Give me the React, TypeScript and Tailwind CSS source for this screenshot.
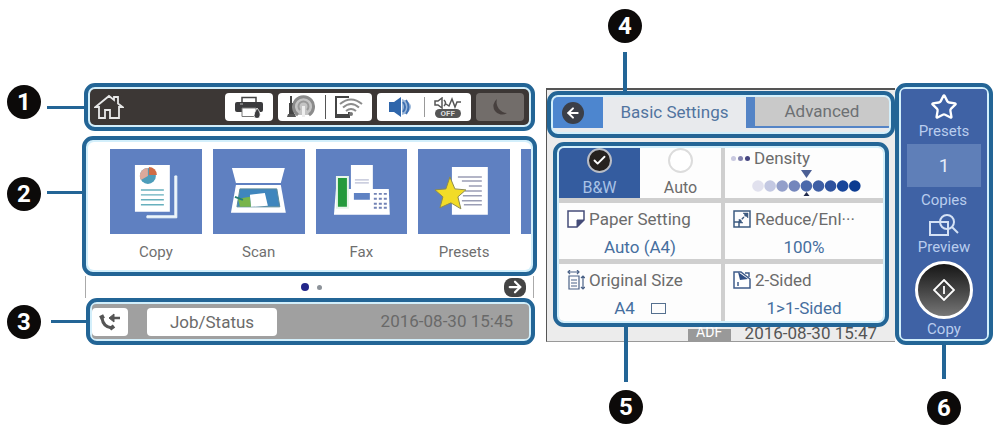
import type { ReactNode } from 'react';
import { ArrowLeft, ArrowRight, Check, Star } from 'lucide-react';
import clsx from 'clsx';

function Badge({ children }: { children: ReactNode }) {
  return (
    <span className="flex size-[34px] shrink-0 items-center justify-center rounded-full bg-[#0c0a09] text-[24px] leading-none font-bold text-white">
      {children}
    </span>
  );
}

function Frame({ className, children }: { className?: string; children: ReactNode }) {
  return (
    <div className={clsx('rounded-[11px] border-4 border-[#236596] bg-[#d3effb] p-[2px]', className)}>
      {children}
    </div>
  );
}

function PrinterIcon() {
  return (
    <svg viewBox="0 0 30 22" className="h-[22px] w-[30px]">
      <path d="M8 7V1.5h14V7" fill="#fff" stroke="#444" strokeWidth="1.5" />
      <path d="M3 6h24q2 0 2 2v6q0 2-2 2H3q-2 0-2-2V8q0-2 2-2z" fill="#3b3b3d" />
      <path d="M6 8h3" stroke="#bbb" />
      <path d="M8 12h14v8.5H8z" fill="#fff" stroke="#777" />
      <path d="M23 12q4 5 3 7.500a3 3 0 0 1-6 0q0-2.500 3-7.500z" fill="#3b3b3d" stroke="#fff" strokeWidth=".8" />
    </svg>
  );
}

function NetworkIcon() {
  return (
    <svg viewBox="0 0 28 24" className="h-6 w-7">
      <path d="M4 1v18" stroke="#444" strokeWidth="2" />
      <path d="M2 8h5v12H2z" fill="#444" />
      <path d="M0 22h9l-1-3H1z" fill="#555" />
      <path d="M11 20a10 10 0 1 1 11 0" fill="#c4c4c4" stroke="#8b8b8b" strokeWidth="3" />
      <path d="M13 15a5 5 0 1 1 7 0" fill="none" stroke="#999" strokeWidth="2" />
      <path d="M16.500 11v11" stroke="#eee" strokeWidth="3" />
    </svg>
  );
}

function TabletWifiIcon() {
  return (
    <svg viewBox="0 0 30 24" className="h-6 w-[30px]" fill="none">
      <path d="M14 3V2H2v20h13v-5" stroke="#444" strokeWidth="2" />
      <path d="M2 19h13v3H2z" fill="#444" />
      <path d="M6 9q11-9 22 0M9 12.500q8-7 16 0M12 16q5-4 10 0" stroke="#8c8c8c" strokeWidth="2" />
      <circle cx="17" cy="19" r="2" fill="#777" />
    </svg>
  );
}

function SpeakerIcon() {
  return (
    <svg viewBox="0 0 22 20" className="h-5 w-[22px]">
      <path d="M0 5h5l7-5v20l-7-5H0z" fill="#2f66ab" />
      <path d="M13 2q9 3 9 8t-9 8z" fill="#9db9da" />
      <path d="M14 5q4 5 0 10M17 3q5 7 0 14" fill="none" stroke="#3f70b1" strokeWidth="2" />
    </svg>
  );
}

function QuietOffIcon() {
  return (
    <span className="flex flex-col items-center">
      <svg viewBox="0 0 28 12" className="h-3 w-7" fill="none" stroke="#555" strokeWidth="1.5">
        <path d="M1 4h3l4-3v10L4 8H1zM10 3q3 3 0 6M12 7l3 2 3-7 3 8 2-5h4" />
      </svg>
      <span className="rounded-full bg-[#555] px-[6px] text-[8px] leading-[9px] font-bold text-[#ddd]">OFF</span>
    </span>
  );
}

function HomeIcon() {
  return (
    <svg viewBox="0 0 30 26" className="h-[26px] w-[30px]" fill="none" stroke="#e8e8e8" strokeWidth="1.8">
      <path d="M5 13H1.500L15 2l5 4V3h4v6.500l4.500 3.500H25v11h-9v-8h-5v8H5z" />
    </svg>
  );
}

function CopyArt() {
  return (
    <svg viewBox="0 0 92 85" className="w-full">
      <path d="M65 27h2v42H37v-2h28z" fill="#eef6fb" stroke="#eef6fb" />
      <path d="M25 16h35v47H25z" fill="#fff" />
      <circle cx="38" cy="27" r="8" fill="#4d9dba" />
      <path d="M38 27V19a8 8 0 0 0-7 12z" fill="#dba99b" />
      <path d="M39 26v-8a8 8 0 0 1 8 8z" fill="#cf6c45" />
      <path d="M31 41h23M31 46h23M31 51h23M31 56h23" stroke="#67b0bd" strokeWidth="1.5" />
    </svg>
  );
}

function ScanArt() {
  return (
    <svg viewBox="0 0 92 85" className="w-full">
      <path d="M19 19h53l-4 15H23z" fill="#fff" />
      <path d="M23 36h45l5 28H18z" fill="#fff" />
      <path d="M27 40h37l3 18H24z" fill="#3f86bd" stroke="#5a8a9a" />
      <path d="M37 46l15-2 3 13-17 1z" fill="#fff" />
      <path d="M25 50l12-2 1 10H27z" fill="#78b54a" />
      <path d="M22 48l8 3" stroke="#267f77" strokeWidth="2" />
    </svg>
  );
}

function FaxArt() {
  return (
    <svg viewBox="0 0 92 85" className="w-full">
      <path d="M35 16h22v25H35z" fill="#fff" />
      <path d="M39 31h14M39 34h14" stroke="#a9adc9" />
      <path d="M20 40h53l1 26H18z" fill="#fff" />
      <path d="M21 28h11v31H21z" fill="#259a3c" stroke="#e8f5ea" strokeWidth="2" />
      <path d="M38 44h16v7H38z" fill="#5f82c3" />
      <path d="M58 45h13M58 50h13M58 55h13M58 59h13" stroke="#7182b5" strokeWidth="2" strokeDasharray="3 2" />
    </svg>
  );
}

function PresetsArt() {
  return (
    <svg viewBox="0 0 92 85" className="w-full">
      <path d="M34 18h36v48H34z" fill="#fff" />
      <path d="M40 28h24M44 32h20M51 37h13M47 42h17M45 47h19M44 52h20M46 56h18" stroke="#9a9db5" strokeWidth="1.500" />
      <path d="M32 28l5 12 11 1-8 7 3 12-10-6-11 5 3-11-8-7 11-1z" fill="#f2dc28" stroke="#8d8b50" />
    </svg>
  );
}

const apps = [
  { label: 'Copy', art: <CopyArt /> },
  { label: 'Scan', art: <ScanArt /> },
  { label: 'Fax', art: <FaxArt /> },
  { label: 'Presets', art: <PresetsArt /> },
];

const densityDots = ['#e1e1ee', '#c3c8e2', '#939fca', '#7486bc', '#4b69ab', '#3f5fa5', '#2e529e', '#17459a', '#0b3b91'];

function PaperIcon() {
  return (
    <svg viewBox="0 0 18 18" className="size-[18px]">
      <path d="M1 1h16v9l-7 7H1z" fill="#fff" stroke="#454c79" strokeWidth="1.500" />
      <path d="M17 10h-7v7z" fill="#454c79" stroke="#454c79" />
    </svg>
  );
}

function ResizeIcon() {
  return (
    <svg viewBox="0 0 18 18" className="size-[18px]" fill="none" stroke="#3d5b80" strokeWidth="1.500">
      <path d="M1 1h16v16H1zM1 12h5v5" />
      <path d="M6 12l8-8" strokeDasharray="3 1" />
      <path d="M10 3h5v5zM6 9l4 4H6z" fill="#3d5b80" strokeWidth=".5" />
    </svg>
  );
}

function OriginalIcon() {
  return (
    <svg viewBox="0 0 18 20" className="h-5 w-[18px]" fill="none" stroke="#4b6287" strokeWidth="1.200">
      <path d="M1 2h11M3 0L1 2l2 2M10 0l2 2-2 2M2 6h10v13H2zM4 10h6M4 13h6M4 16h6M16 6v13M14 8l2-2 2 2M14 17l2 2 2-2" />
    </svg>
  );
}

function SidedIcon() {
  return (
    <svg viewBox="0 0 18 18" className="size-[18px]">
      <path d="M1 1h7l9 7v9H1z" fill="#fff" stroke="#3f5c8a" strokeWidth="1.500" />
      <path d="M5 1l2 8 8-1z" fill="#2f4f86" />
      <path d="M5 11v4M12 2h4v4" fill="none" stroke="#3f5c8a" strokeWidth="1.500" />
    </svg>
  );
}

function SettingCell({ icon, title, value }: { icon: ReactNode; title: string; value: ReactNode }) {
  return (
    <button className="flex h-full min-w-0 flex-col bg-[#fdfdfd] px-2 pt-1 text-[17px] leading-6">
      <span className="flex items-center gap-1 whitespace-nowrap text-[#6b6b6b]">
        {icon}
        {title}
      </span>
      <span className="flex items-center justify-center gap-4 self-stretch pt-1 text-[#466f9f]">{value}</span>
    </button>
  );
}

function HomeScreen() {
  return (
    <section className="pt-[83px] pl-[7px]">
      {/* Status icons */}
      <div className="mr-[2px] flex">
        <div className="pt-[2px]"><Badge>1</Badge></div>
        <span className="ml-[6px] h-[3px] w-[37px] shrink-0 self-center bg-[#236596]" />
        <Frame className="min-w-0 flex-1">
          <div className="flex h-9 items-center gap-[5px] rounded-[5px] bg-[#3c3735] pr-[5px] pl-1">
            <button aria-label="Home"><HomeIcon /></button>
            <button aria-label="Ink levels" className="ml-auto flex h-7 w-12 items-center justify-center rounded bg-white">
              <PrinterIcon />
            </button>
            <div className="flex h-7 w-[94px] items-center rounded bg-white">
              <button aria-label="Network" className="flex flex-1 justify-center border-r border-[#555]"><NetworkIcon /></button>
              <button aria-label="Wi-Fi device" className="flex flex-1 justify-center"><TabletWifiIcon /></button>
            </div>
            <div className="flex h-7 w-[94px] items-center rounded bg-white">
              <button aria-label="Sound" className="flex flex-1 justify-center border-r border-[#999]"><SpeakerIcon /></button>
              <button aria-label="Quiet mode" className="flex flex-1 justify-center"><QuietOffIcon /></button>
            </div>
            <button aria-label="Sleep" className="flex h-7 w-12 items-center justify-center rounded bg-[#726d6a]">
              <svg viewBox="0 0 16 18" className="h-[18px] w-4">
                <path d="M5 1a8 8 0 1 0 10 14A11 11 0 0 1 5 1z" fill="#47403e" />
              </svg>
            </button>
          </div>
        </Frame>
      </div>

      {/* App tiles */}
      <div className="mt-[5px] flex">
        <div className="pt-[41px]"><Badge>2</Badge></div>
        <span className="mt-[55px] ml-[6px] h-[3px] w-[35px] shrink-0 bg-[#236596]" />
        <Frame className="min-w-0 flex-1">
          <div className="flex h-32 gap-[11px] overflow-hidden rounded-[6px] bg-white pt-[7px] pl-[22px]">
            {apps.map((app) => (
              <button key={app.label} className="flex min-w-0 flex-[92_0_0px] flex-col items-center">
                <span className="w-full bg-[#5f80c1]">{app.art}</span>
                <span className="pt-2 text-[15px] leading-5 text-[#6f6f6f]">{app.label}</span>
              </button>
            ))}
            <span className="h-[85px] w-[10px] bg-[#5f80c1]" />
          </div>
        </Frame>
      </div>

      {/* Pager */}
      <div className="mr-[3px] ml-[78px] flex h-[22px] items-center border-x border-[#aaa]">
        <span className="flex flex-1 items-center justify-center gap-1 pl-8">
          <span className="size-2 rounded-full bg-[#23268a]" />
          <span className="ml-1 size-[5px] rounded-full bg-[#8c9299]" />
        </span>
        <button aria-label="Next page" className="mr-[7px] flex h-[19px] w-[22px] items-center justify-center rounded-[8px] bg-[#444] text-white">
          <ArrowRight size={18} strokeWidth={3} />
        </button>
      </div>

      {/* Status bar */}
      <div className="mr-[2px] flex items-center">
        <Badge>3</Badge>
        <span className="ml-[10px] h-[3px] w-[35px] shrink-0 bg-[#236596]" />
        <Frame className="min-w-0 flex-1">
          <div className="flex h-[35px] items-center rounded-[4px] bg-[#a0a0a0] pr-4">
            <button aria-label="Missed call" className="flex h-7 w-9 items-center justify-center rounded bg-white">
              <svg viewBox="0 0 22 18" className="h-[18px] w-[22px]" fill="none" stroke="#555">
                <path d="M3 5q1 9 10 10" strokeWidth="3" />
                <path d="M1 5l4-2M11 16l4-3" strokeWidth="4" />
                <path d="M21 5h-8" strokeWidth="2.500" />
                <path d="M15 1v8l-5-4z" fill="#555" strokeWidth="1" />
              </svg>
            </button>
            <button className="ml-[19px] h-7 w-[130px] rounded bg-white text-[17px] leading-7 text-[#6b6b6b]">Job/Status</button>
            <time className="ml-auto text-[17px] whitespace-nowrap text-[#696969]">2016-08-30 15:45</time>
          </div>
        </Frame>
      </div>
    </section>
  );
}

function CopyScreen() {
  return (
    <div className="min-w-0 flex-1 pt-[9px] pl-[9px]">
      <div className="ml-[62px] flex w-[34px] flex-col items-center">
        <Badge>4</Badge>
        <span className="relative z-10 mt-[9px] -mb-[3px] h-[39px] w-1 bg-[#236596]" />
      </div>

      <div className="border-t-2 border-b border-l border-[#555] border-b-[#999] bg-[#ececec] pt-[1px]">
        {/* Tabs */}
        <Frame>
          <div role="tablist" className="flex h-[35px] items-start overflow-hidden rounded-[5px] bg-[#e8eaed]">
            <button aria-label="Back" className="h-[31px] w-[50px] shrink-0 bg-[#4d86cf] pl-[9px]">
              <span className="flex size-[22px] items-center justify-center rounded-full bg-[#3b3f48] text-white">
                <ArrowLeft size={16} strokeWidth={3} />
              </span>
            </button>
            <button role="tab" aria-selected="true" className="h-[31px] min-w-0 flex-[143_0_0px] text-[17px] whitespace-nowrap text-[#51749f]">
              Basic Settings
            </button>
            <button role="tab" aria-selected="false" className="h-[31px] min-w-0 flex-[134_0_0px] border-b-2 border-l-[9px] border-[#5484c6] bg-[#c9c9c9] text-[17px] text-[#6d7073]">
              Advanced
            </button>
          </div>
        </Frame>

        {/* Settings */}
        <Frame className="mx-[6px] mt-1">
          <div className="grid grid-cols-[162fr_158fr] grid-rows-[50px_56px_57px] gap-x-1 gap-y-[5px] overflow-hidden rounded-[5px] bg-[#cfcfcf]">
            <div role="radiogroup" aria-label="Color mode" className="grid grid-cols-2 text-[16px] leading-5">
              <label className="flex flex-col items-center justify-end bg-[#345c9f] text-[#a9c2e6]">
                <span className="grid place-items-center">
                  <input type="radio" name="color" defaultChecked className="col-start-1 row-start-1 size-[25px] appearance-none rounded-full border-2 border-[#b9bdc6] bg-[#26221f]" />
                  <Check size={15} strokeWidth={3} className="pointer-events-none col-start-1 row-start-1 text-white" />
                </span>
                <span className="pt-[5px]">B&amp;W</span>
              </label>
              <label className="flex flex-col items-center justify-end bg-[#fdfdfd] text-[#6b6b6b]">
                <input type="radio" name="color" className="size-[25px] appearance-none rounded-full border-2 border-[#dcdcdc] bg-white" />
                <span className="pt-[5px]">Auto</span>
              </label>
            </div>
            <label className="bg-[#fdfdfd] pl-[6px] text-[17px] leading-5 text-[#6b6b6b]">
              <span className="flex items-center gap-1">
                <span className="flex items-center gap-[2px]">
                  <span className="size-[5px] rounded-full bg-[#c9c9e0]" />
                  <span className="size-[5px] rounded-full bg-[#8181ad]" />
                  <span className="size-[5px] rounded-full bg-[#454580]" />
                </span>
                Density
              </span>
              <span className="relative ml-5 block w-[110px]">
                <svg viewBox="0 0 110 28" className="w-full">
                  <path d="M50 2h11l-5.500 8z" fill="#4c5f94" />
                  {densityDots.map((color, i) => (
                    <circle key={color} cx={7 + i * 12.1} cy="18" r="5.800" fill={color} />
                  ))}
                  <path d="M55.500 24l3 4h-6z" fill="#222b4c" />
                </svg>
                <input type="range" min="-4" max="4" defaultValue="0" className="absolute inset-0 w-full opacity-0" />
              </span>
            </label>
            <SettingCell icon={<PaperIcon />} title="Paper Setting" value="Auto (A4)" />
            <SettingCell icon={<ResizeIcon />} title="Reduce/Enl···" value="100%" />
            <SettingCell
              icon={<OriginalIcon />}
              title="Original Size"
              value={<>A4 <span className="h-[11px] w-[15px] border border-[#55708f]" /></>}
            />
            <SettingCell icon={<SidedIcon />} title="2-Sided" value="1>1-Sided" />
          </div>
        </Frame>

        <div className="flex h-[14px] items-end justify-end gap-[14px] overflow-hidden pr-[18px] text-[17px] leading-4 text-[#555]">
          <span className="h-[12px] w-[43px] bg-[#999] text-center text-[14px] leading-[6px] text-white">ADF</span>
          <time className="whitespace-nowrap">2016-08-30 15:47</time>
        </div>
      </div>

      <div className="ml-[63px] flex w-[34px] flex-col items-center">
        <span className="relative z-10 -mt-4 mb-2 h-14 w-1 bg-[#236596]" />
        <Badge>5</Badge>
      </div>
    </div>
  );
}

function SidePanel() {
  return (
    <div className="flex w-[100px] shrink-0 flex-col items-center pt-[83px] pr-[2px]">
      <Frame className="w-full">
        <div className="flex h-[250px] flex-col items-center rounded-[4px] bg-[#3f62a5] pt-1 text-[15px] leading-5 text-[#b9cdee]">
          <button className="flex flex-col items-center">
            <Star size={28} className="text-white" />
            <span>Presets</span>
          </button>
          <input id="copies" defaultValue="1" className="mt-[3px] h-[43px] w-[74px] bg-[#5f7fb8] text-center text-[19px] text-[#e4ecf9]" />
          <label htmlFor="copies" className="pt-[3px]">Copies</label>
          <button className="flex flex-col items-center pt-[3px]">
            <svg viewBox="0 0 30 24" className="h-6 w-[30px]" fill="none" stroke="#d5e2f5" strokeWidth="2">
              <path d="M12 9H1v13h18v-7" />
              <path d="M10 9h9v6" />
              <circle cx="18" cy="9" r="7" />
              <path d="M23 14l6 6" />
            </svg>
            <span>Preview</span>
          </button>
          <button className="flex flex-col items-center pt-1">
            <span className="flex size-[58px] items-center justify-center rounded-full border-[3px] border-white bg-linear-to-b from-[#171717] to-[#777]">
              <svg viewBox="0 0 22 22" className="size-[22px]" fill="none" stroke="#fff" strokeWidth="1.800">
                <path d="M11 1l10 10-10 10L1 11zM11 7v8" />
              </svg>
            </span>
            <span>Copy</span>
          </button>
        </div>
      </Frame>
      <span className="mb-3 h-[34px] w-1 bg-[#236596]" />
      <Badge>6</Badge>
    </div>
  );
}

export default function App() {
  return (
    <main className="grid grid-cols-[537fr_458fr] bg-white font-['Roboto',sans-serif]">
      <HomeScreen />
      <section className="flex min-w-0">
        <CopyScreen />
        <SidePanel />
      </section>
    </main>
  );
}
